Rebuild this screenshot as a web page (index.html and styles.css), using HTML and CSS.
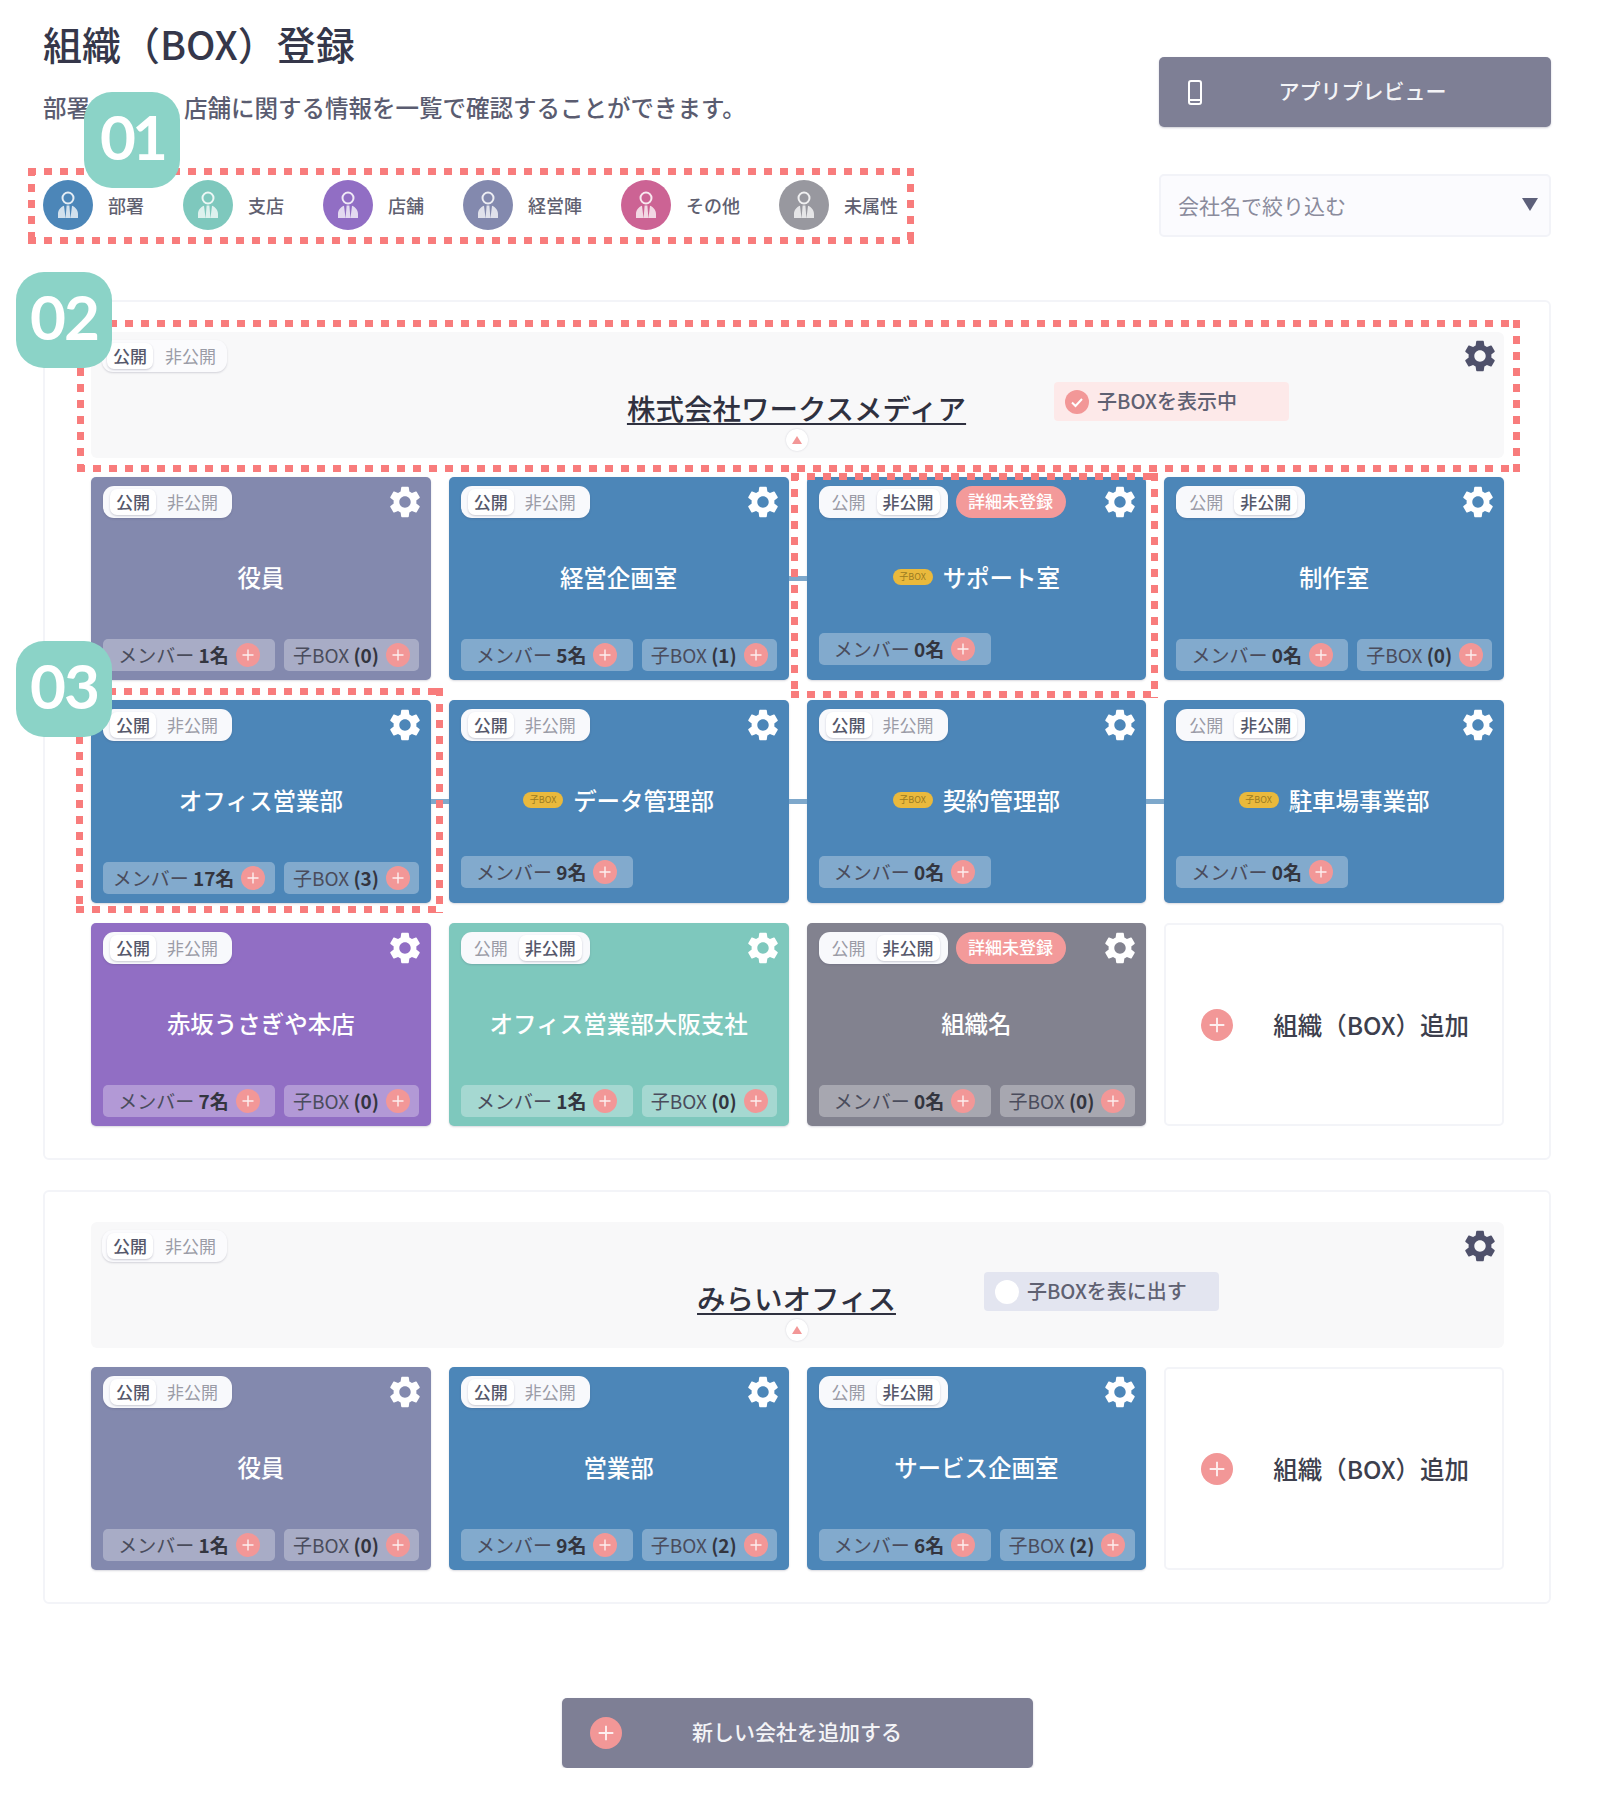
FILE: index.html
```html
<!DOCTYPE html>
<html lang="ja">
<head>
    <meta charset="UTF-8">
    <title>組織（BOX）登録</title>
    <link rel="stylesheet" href="styles.css">
</head>
<body>
    <svg class="defs" width="0" height="0">
        <symbol id="gear" viewBox="0 0 24 24">
            <path fill="currentColor" d="M19.14 12.94c.04-.3.06-.61.06-.94 0-.32-.02-.64-.07-.94l2.03-1.58a.49.49 0 0 0 .12-.61l-1.92-3.32a.488.488 0 0 0-.59-.22l-2.39.96c-.5-.38-1.03-.7-1.62-.94l-.36-2.54a.484.484 0 0 0-.48-.41h-3.84c-.24 0-.43.17-.47.41l-.36 2.54c-.59.24-1.13.57-1.62.94l-2.39-.96c-.22-.08-.47 0-.59.22L2.74 8.87c-.12.21-.08.47.12.61l2.03 1.58c-.05.3-.09.63-.09.94s.02.64.07.94l-2.03 1.58a.49.49 0 0 0-.12.61l1.92 3.32c.12.22.37.29.59.22l2.39-.96c.5.38 1.03.7 1.62.94l.36 2.54c.05.24.24.41.48.41h3.84c.24 0 .44-.17.47-.41l.36-2.54c.59-.24 1.13-.56 1.62-.94l2.39.96c.22.08.47 0 .59-.22l1.92-3.32c.12-.22.07-.47-.12-.61l-2.01-1.58zM12 15.6c-1.98 0-3.6-1.62-3.6-3.6s1.62-3.6 3.6-3.6 3.6 1.62 3.6 3.6-1.62 3.6-3.6 3.6z"/>
        </symbol>
        <symbol id="plus" viewBox="0 0 24 24">
            <circle cx="12" cy="12" r="12" fill="#f29797"/>
            <path d="M12 6.5v11M6.5 12h11" stroke="#fff" stroke-width="1.4" opacity=".85"/>
        </symbol>
        <symbol id="person" viewBox="0 0 50 50">
            <circle cx="25" cy="18" r="5.5" fill="none" stroke="#fff" stroke-width="2" opacity=".85"/>
            <path fill="#fff" opacity=".75" d="M15 38v-4c0-4 2.5-7 6-8.3L22.5 38zM23.6 25.6h2.8l1 12.4h-4.8zM35 38v-4c0-4-2.5-7-6-8.3L27.5 38z"/>
        </symbol>
    </svg>

    <div class="page">
        <header class="top">
            <div class="top-left">
                <h1>組織（BOX）登録</h1>
                <p class="lead">部署・支店・店舗に関する情報を一覧で確認することができます。</p>
                <div class="legend">
                    <span class="num num-legend">01</span>
                    <span class="mark"></span>
                    <div class="legend-item"><svg class="legend-icon c-dept"><use href="#person"/></svg>部署</div>
                    <div class="legend-item"><svg class="legend-icon c-branch"><use href="#person"/></svg>支店</div>
                    <div class="legend-item"><svg class="legend-icon c-shop"><use href="#person"/></svg>店舗</div>
                    <div class="legend-item"><svg class="legend-icon c-exec"><use href="#person"/></svg>経営陣</div>
                    <div class="legend-item"><svg class="legend-icon c-other"><use href="#person"/></svg>その他</div>
                    <div class="legend-item"><svg class="legend-icon c-none"><use href="#person"/></svg>未属性</div>
                </div>
            </div>
            <div class="top-right">
                <button class="btn btn-preview">
                    <svg class="phone" viewBox="0 0 14 25"><rect x="1" y="1" width="12" height="23" rx="2" fill="none" stroke="#fff" stroke-width="2"/><path d="M1 20h12" stroke="#fff" stroke-width="2"/></svg>
                    <span>アプリプレビュー</span>
                </button>
                <div class="select">会社名で絞り込む<span class="arrow"></span></div>
            </div>
        </header>

        <section class="company">
            <div class="company-head">
                <span class="num num-head">02</span>
                <span class="mark mark-head"></span>
                <div class="row-top">
                    <div class="toggle toggle-head"><span class="on">公開</span><span>非公開</span></div>
                    <svg class="gear gear-dark"><use href="#gear"/></svg>
                </div>
                <div class="company-row">
                    <span></span>
                    <h2>株式会社ワークスメディア</h2>
                    <div class="child-switch active"><span class="dot"><svg viewBox="0 0 24 24"><path d="M7 12.5l3.5 3.5L17 9" fill="none" stroke="#fff" stroke-width="2"/></svg></span>子BOXを表示中</div>
                </div>
                <span class="caret"></span>
            </div>
            <div class="cards">
                <div class="card c-exec">
                    <div class="row-top"><div class="toggle"><span class="on">公開</span><span>非公開</span></div><svg class="gear"><use href="#gear"/></svg></div>
                    <div class="card-title">役員</div>
                    <div class="chips"><div class="chip chip-member">メンバー <b>1名</b><svg class="plus"><use href="#plus"/></svg></div><div class="chip chip-box">子BOX <b>(0)</b><svg class="plus"><use href="#plus"/></svg></div></div>
                </div>
                <div class="card c-dept">
                    <div class="row-top"><div class="toggle"><span class="on">公開</span><span>非公開</span></div><svg class="gear"><use href="#gear"/></svg></div>
                    <div class="card-title">経営企画室</div>
                    <div class="chips"><div class="chip chip-member">メンバー <b>5名</b><svg class="plus"><use href="#plus"/></svg></div><div class="chip chip-box">子BOX <b>(1)</b><svg class="plus"><use href="#plus"/></svg></div></div>
                </div>
                <div class="card c-dept linked no-child">
                    <span class="mark mark-support"></span>
                    <div class="row-top"><div class="toggle"><span>公開</span><span class="on">非公開</span></div><span class="unregistered">詳細未登録</span><svg class="gear"><use href="#gear"/></svg></div>
                    <div class="card-title"><span class="tag">子BOX</span>サポート室</div>
                    <div class="chips"><div class="chip chip-member">メンバー <b>0名</b><svg class="plus"><use href="#plus"/></svg></div></div>
                </div>
                <div class="card c-dept">
                    <div class="row-top"><div class="toggle"><span>公開</span><span class="on">非公開</span></div><svg class="gear"><use href="#gear"/></svg></div>
                    <div class="card-title">制作室</div>
                    <div class="chips"><div class="chip chip-member">メンバー <b>0名</b><svg class="plus"><use href="#plus"/></svg></div><div class="chip chip-box">子BOX <b>(0)</b><svg class="plus"><use href="#plus"/></svg></div></div>
                </div>

                <div class="card c-dept">
                    <span class="num num-card">03</span>
                    <span class="mark mark-card"></span>
                    <div class="row-top"><div class="toggle"><span class="on">公開</span><span>非公開</span></div><svg class="gear"><use href="#gear"/></svg></div>
                    <div class="card-title">オフィス営業部</div>
                    <div class="chips"><div class="chip chip-member">メンバー <b>17名</b><svg class="plus"><use href="#plus"/></svg></div><div class="chip chip-box">子BOX <b>(3)</b><svg class="plus"><use href="#plus"/></svg></div></div>
                </div>
                <div class="card c-dept linked no-child">
                    <div class="row-top"><div class="toggle"><span class="on">公開</span><span>非公開</span></div><svg class="gear"><use href="#gear"/></svg></div>
                    <div class="card-title"><span class="tag">子BOX</span>データ管理部</div>
                    <div class="chips"><div class="chip chip-member">メンバー <b>9名</b><svg class="plus"><use href="#plus"/></svg></div></div>
                </div>
                <div class="card c-dept linked no-child">
                    <div class="row-top"><div class="toggle"><span class="on">公開</span><span>非公開</span></div><svg class="gear"><use href="#gear"/></svg></div>
                    <div class="card-title"><span class="tag">子BOX</span>契約管理部</div>
                    <div class="chips"><div class="chip chip-member">メンバー <b>0名</b><svg class="plus"><use href="#plus"/></svg></div></div>
                </div>
                <div class="card c-dept linked no-child">
                    <div class="row-top"><div class="toggle"><span>公開</span><span class="on">非公開</span></div><svg class="gear"><use href="#gear"/></svg></div>
                    <div class="card-title"><span class="tag">子BOX</span>駐車場事業部</div>
                    <div class="chips"><div class="chip chip-member">メンバー <b>0名</b><svg class="plus"><use href="#plus"/></svg></div></div>
                </div>

                <div class="card c-shop">
                    <div class="row-top"><div class="toggle"><span class="on">公開</span><span>非公開</span></div><svg class="gear"><use href="#gear"/></svg></div>
                    <div class="card-title">赤坂うさぎや本店</div>
                    <div class="chips"><div class="chip chip-member">メンバー <b>7名</b><svg class="plus"><use href="#plus"/></svg></div><div class="chip chip-box">子BOX <b>(0)</b><svg class="plus"><use href="#plus"/></svg></div></div>
                </div>
                <div class="card c-branch">
                    <div class="row-top"><div class="toggle"><span>公開</span><span class="on">非公開</span></div><svg class="gear"><use href="#gear"/></svg></div>
                    <div class="card-title">オフィス営業部大阪支社</div>
                    <div class="chips"><div class="chip chip-member">メンバー <b>1名</b><svg class="plus"><use href="#plus"/></svg></div><div class="chip chip-box">子BOX <b>(0)</b><svg class="plus"><use href="#plus"/></svg></div></div>
                </div>
                <div class="card c-gray">
                    <div class="row-top"><div class="toggle"><span>公開</span><span class="on">非公開</span></div><span class="unregistered">詳細未登録</span><svg class="gear"><use href="#gear"/></svg></div>
                    <div class="card-title">組織名</div>
                    <div class="chips"><div class="chip chip-member">メンバー <b>0名</b><svg class="plus"><use href="#plus"/></svg></div><div class="chip chip-box">子BOX <b>(0)</b><svg class="plus"><use href="#plus"/></svg></div></div>
                </div>
                <div class="card-add"><svg class="plus plus-lg"><use href="#plus"/></svg>組織（BOX）追加</div>
            </div>
        </section>

        <section class="company">
            <div class="company-head">
                <div class="row-top">
                    <div class="toggle toggle-head"><span class="on">公開</span><span>非公開</span></div>
                    <svg class="gear gear-dark"><use href="#gear"/></svg>
                </div>
                <div class="company-row">
                    <span></span>
                    <h2>みらいオフィス</h2>
                    <div class="child-switch"><span class="dot"></span>子BOXを表に出す</div>
                </div>
                <span class="caret"></span>
            </div>
            <div class="cards">
                <div class="card c-exec">
                    <div class="row-top"><div class="toggle"><span class="on">公開</span><span>非公開</span></div><svg class="gear"><use href="#gear"/></svg></div>
                    <div class="card-title">役員</div>
                    <div class="chips"><div class="chip chip-member">メンバー <b>1名</b><svg class="plus"><use href="#plus"/></svg></div><div class="chip chip-box">子BOX <b>(0)</b><svg class="plus"><use href="#plus"/></svg></div></div>
                </div>
                <div class="card c-dept">
                    <div class="row-top"><div class="toggle"><span class="on">公開</span><span>非公開</span></div><svg class="gear"><use href="#gear"/></svg></div>
                    <div class="card-title">営業部</div>
                    <div class="chips"><div class="chip chip-member">メンバー <b>9名</b><svg class="plus"><use href="#plus"/></svg></div><div class="chip chip-box">子BOX <b>(2)</b><svg class="plus"><use href="#plus"/></svg></div></div>
                </div>
                <div class="card c-dept">
                    <div class="row-top"><div class="toggle"><span>公開</span><span class="on">非公開</span></div><svg class="gear"><use href="#gear"/></svg></div>
                    <div class="card-title">サービス企画室</div>
                    <div class="chips"><div class="chip chip-member">メンバー <b>6名</b><svg class="plus"><use href="#plus"/></svg></div><div class="chip chip-box">子BOX <b>(2)</b><svg class="plus"><use href="#plus"/></svg></div></div>
                </div>
                <div class="card-add"><svg class="plus plus-lg"><use href="#plus"/></svg>組織（BOX）追加</div>
            </div>
        </section>

        <div class="bottom">
            <button class="btn btn-new">
                <svg class="plus plus-lg"><use href="#plus"/></svg>
                <span>新しい会社を追加する</span>
            </button>
        </div>
    </div>
</body>
</html>
```

FILE: styles.css
```css
* {
    box-sizing: border-box;
}
body {
    margin: 0;
    background-color: #fff;
    color: #3a3c4c;
    font-family: "Noto Sans CJK JP", "Noto Sans", sans-serif;
}
.defs {
    position: absolute;
}
.page {
    padding: 18px 49px 0 43px;
}
.top {
    display: flex;
    justify-content: space-between;
    margin-bottom: 63px;
}
h1 {
    margin: 0;
    font-size: 39px;
    line-height: 50px;
    font-weight: 500;
    color: #35374a;
}
.lead {
    margin: 22px 0 0;
    font-size: 23.5px;
    line-height: 34px;
    font-weight: 500;
    color: #5a5c70;
    white-space: nowrap;
}
.legend {
    position: relative;
    display: flex;
    gap: 39px;
    margin-top: 56px;
}
.legend-item {
    display: flex;
    align-items: center;
    gap: 15px;
    font-size: 18px;
    font-weight: 500;
    color: #5f6070;
}
.legend-icon {
    width: 50px;
    height: 50px;
    border-radius: 50%;
}
.c-dept { background-color: #4c86b8; }
.c-branch { background-color: #7ec8bd; }
.c-shop { background-color: #916ec4; }
.c-exec { background-color: #8389ae; }
.c-other { background-color: #cc6394; }
.c-none { background-color: #98989f; }
.c-gray { background-color: #82828f; }

/* 注釈(点線と番号) */
.mark {
    position: absolute;
    top: -12px;
    right: -16px;
    bottom: -14px;
    left: -15px;
    z-index: 2;
    pointer-events: none;
    background:
        repeating-linear-gradient(90deg, #f87c7c 0 8px, transparent 8px 16px) top / 100% 7px no-repeat,
        repeating-linear-gradient(90deg, #f87c7c 0 8px, transparent 8px 16px) bottom / 100% 7px no-repeat,
        repeating-linear-gradient(180deg, #f87c7c 0 8px, transparent 8px 16px) left / 7px 100% no-repeat,
        repeating-linear-gradient(180deg, #f87c7c 0 8px, transparent 8px 16px) right / 7px 100% no-repeat;
}
.mark-head {
    left: -14px;
}
.mark-card {
    top: -12px;
    right: -12px;
    bottom: -10px;
}
.mark-support {
    top: -4px;
    right: -12px;
    bottom: -18px;
    left: -16px;
}
.num {
    position: absolute;
    z-index: 3;
    display: flex;
    align-items: center;
    justify-content: center;
    width: 96px;
    height: 96px;
    padding-bottom: 8px;
    border-radius: 28px;
    background-color: #8bd3c7;
    color: #fff;
    font-family: "Lato", sans-serif;
    font-size: 62px;
    font-weight: 700;
    letter-spacing: -2px;
}
.num-legend {
    left: 41px;
    top: -88px;
    letter-spacing: -4px;
}
.num-head {
    left: -75px;
    top: -60px;
}
.num-card {
    left: -75px;
    top: -59px;
}

/* 右上 */
.top-right {
    display: flex;
    flex-direction: column;
    gap: 47px;
    width: 392px;
    padding-top: 39px;
}
.btn {
    display: flex;
    align-items: center;
    height: 70px;
    border: none;
    border-radius: 5px;
    background-color: #7e7f95;
    color: #f4f4f7;
    font-family: inherit;
    font-size: 21px;
    font-weight: 500;
    box-shadow: 0 1px 2px rgba(60, 60, 90, 0.25);
}
.btn span {
    flex: 1;
    padding-bottom: 4px;
    text-align: center;
}
.btn-preview {
    padding: 0 28px 0 29px;
}
.phone {
    width: 14px;
    height: 25px;
}
.select {
    position: relative;
    display: flex;
    align-items: center;
    height: 63px;
    padding: 0 0 2px 17px;
    border: 2px solid #f2f3f8;
    border-radius: 5px;
    background-color: #fbfbfe;
    color: #8a8b9c;
    font-size: 21px;
}
.arrow {
    position: absolute;
    right: 11px;
    top: 22px;
    border-style: solid;
    border-width: 13px 8px 0;
    border-color: #5d607a transparent transparent;
}

/* 会社 */
.company {
    margin-bottom: 30px;
    padding: 30px 45px 32px 46px;
    border: 2px solid #f3f4f8;
    border-radius: 6px;
}
.company-head {
    position: relative;
    height: 126px;
    padding: 5px 5px 0 11px;
    border-radius: 6px;
    background-color: #f8f8f9;
}
.row-top {
    display: flex;
    align-items: center;
    gap: 8px;
    height: 38px;
}
.gear {
    width: 38px;
    height: 38px;
    margin-left: auto;
    color: #fff;
}
.gear-dark {
    color: #4f516b;
}
.toggle {
    display: flex;
    flex: none;
    align-items: center;
    justify-content: space-between;
    width: 129px;
    height: 32px;
    padding: 3px 8px 3px 7px;
    border-radius: 11px;
    background-color: #f8f9fc;
    color: #9a9ba6;
    font-size: 17px;
    box-shadow: 0 1px 2px rgba(60, 60, 90, 0.2);
}
.toggle span {
    padding: 0 6px;
    line-height: 26px;
    white-space: nowrap;
}
.toggle .on {
    border-radius: 7px;
    background-color: #fff;
    color: #55576a;
    font-weight: 500;
    box-shadow: 0 1px 2px rgba(60, 60, 90, 0.25);
}
.toggle-head {
    width: 125px;
    padding: 3px 5px;
    background-color: #fbfbfd;
}
.company-row {
    display: grid;
    grid-template-columns: 1fr auto 1fr;
    align-items: start;
    margin: 7px 0 0;
    padding-right: 8px;
}
h2 {
    margin: 7px 0 0;
    font-size: 28.5px;
    line-height: 38px;
    font-weight: 500;
    color: #2f3140;
    text-decoration: underline;
    text-decoration-thickness: 2px;
    text-underline-offset: 3px;
}
.child-switch {
    display: flex;
    align-items: center;
    gap: 8px;
    justify-self: start;
    width: 235px;
    height: 39px;
    margin-left: 88px;
    padding: 0 0 2px 11px;
    border-radius: 4px;
    background-color: #e3e5f0;
    color: #5f6172;
    font-size: 20px;
    font-weight: 500;
}
.child-switch .dot {
    flex: none;
    width: 24px;
    height: 24px;
    margin-top: 2px;
    border-radius: 50%;
    background-color: #fff;
}
.child-switch.active {
    background-color: #fde9e9;
}
.child-switch.active .dot {
    background-color: #f29797;
}
.dot svg {
    display: block;
}
.caret {
    position: absolute;
    left: 50%;
    bottom: 7px;
    width: 22px;
    height: 22px;
    margin-left: -12px;
    border-radius: 50%;
    background-color: #fff;
    box-shadow: 0 0 2px rgba(60, 60, 90, 0.2);
}
.caret::after {
    content: "";
    position: absolute;
    left: 6px;
    top: 7px;
    border-style: solid;
    border-width: 0 5px 8px;
    border-color: transparent transparent #f29797;
}

/* カード */
.cards {
    display: grid;
    grid-template-columns: repeat(4, 1fr);
    gap: 20px 18px;
    margin-top: 19px;
}
.card {
    position: relative;
    display: flex;
    flex-direction: column;
    height: 203px;
    padding: 6px 7px 9px 12px;
    border-radius: 5px;
    box-shadow: 0 1px 2px rgba(60, 60, 90, 0.2);
}
.card.linked::before {
    content: "";
    position: absolute;
    left: -18px;
    top: 99px;
    width: 18px;
    height: 5px;
    background-color: #7ea8cb;
}
.unregistered {
    flex: none;
    width: 110px;
    height: 32px;
    border-radius: 16px;
    background-color: #f39a9a;
    color: #fff;
    font-size: 17px;
    font-weight: 500;
    line-height: 30px;
    text-align: center;
}
.card-title {
    display: flex;
    flex: 1;
    align-items: center;
    justify-content: center;
    gap: 10px;
    padding: 0 5px 6px 0;
    color: #fff;
    font-size: 23.5px;
    font-weight: 500;
}
.no-child {
    padding-bottom: 15px;
}
.no-child .card-title {
    padding-bottom: 0;
}
.tag {
    width: 40px;
    height: 16px;
    border-radius: 8px;
    background-color: #eab93c;
    color: #9a7b22;
    font-size: 9px;
    font-weight: 400;
    line-height: 16px;
    text-align: center;
}
.chips {
    display: flex;
    gap: 9px;
    padding-right: 4px;
}
.chip {
    display: flex;
    align-items: center;
    justify-content: center;
    height: 32px;
    padding-bottom: 2px;
    border-radius: 5px;
    background-color: rgba(255, 255, 255, 0.3);
    color: #4a4c5c;
    font-size: 19px;
    white-space: pre;
}
.chip b {
    color: #33353f;
    font-weight: 700;
}
.chip-member {
    width: 172px;
}
.chip-box {
    width: 135px;
}
.plus {
    flex: none;
    width: 24px;
    height: 24px;
    margin: 2px 0 0 7px;
}
.plus-lg {
    width: 32px;
    height: 32px;
    margin: 0;
}
.card-add {
    display: flex;
    align-items: center;
    gap: 40px;
    height: 203px;
    padding: 0 0 0 35px;
    border: 2px solid #f3f4f8;
    border-radius: 5px;
    color: #3d3f4d;
    font-size: 24.5px;
    font-weight: 500;
    white-space: nowrap;
}

/* 下のボタン */
.bottom {
    display: flex;
    justify-content: center;
    margin-top: 94px;
}
.btn-new {
    width: 471px;
    padding: 0 60px 0 28px;
}
```
